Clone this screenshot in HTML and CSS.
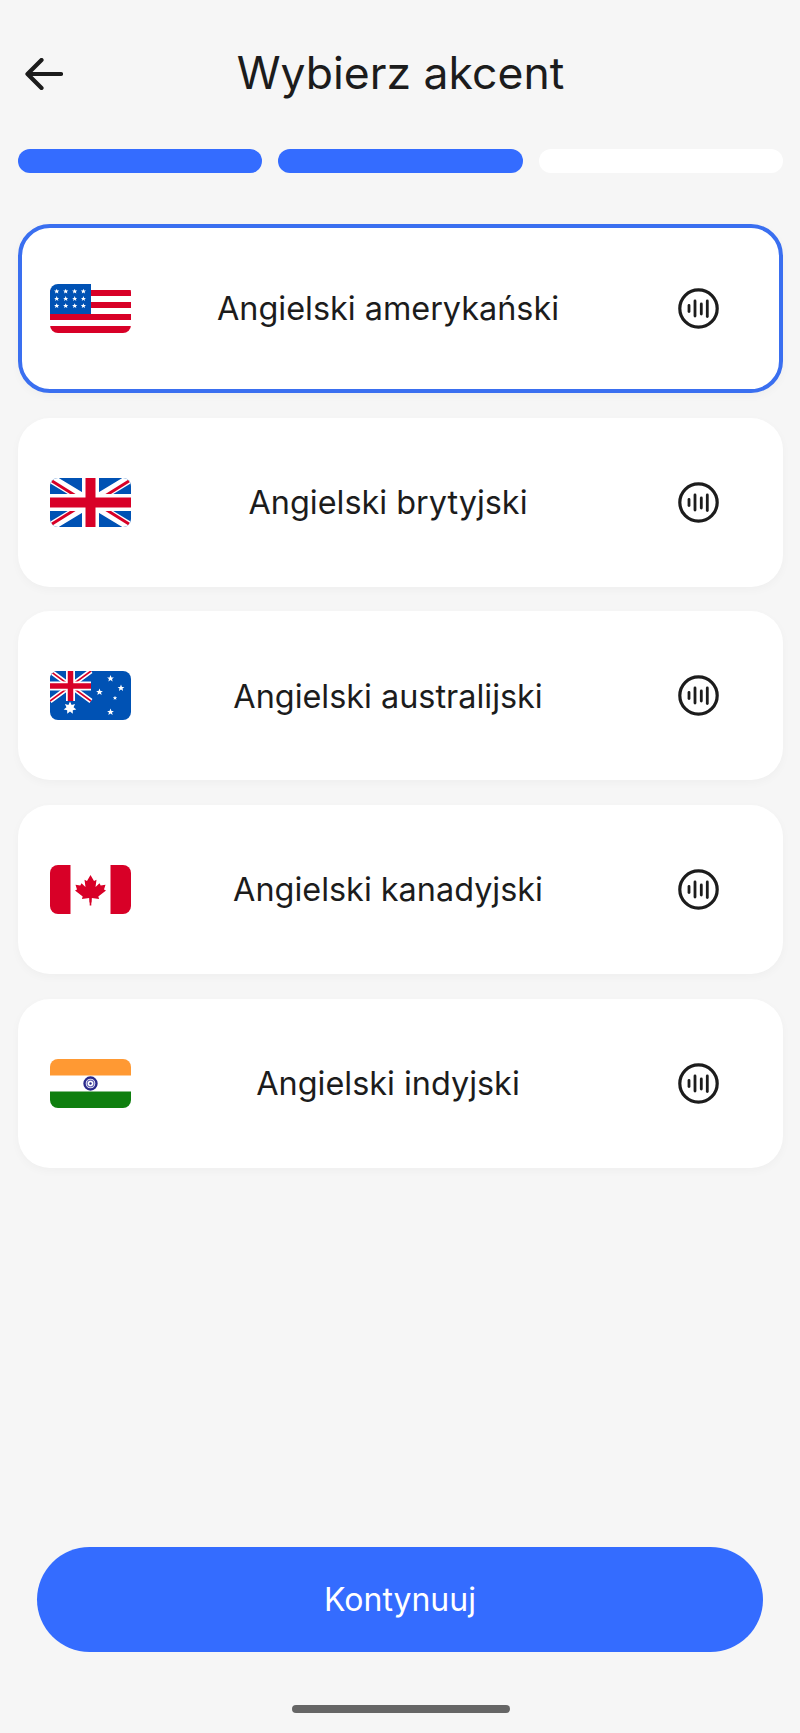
FILE: index.html
```html
<!DOCTYPE html>
<html lang="pl">
<head>
<meta charset="UTF-8" />
<meta name="viewport" content="width=device-width, initial-scale=1" />
<title>Wybierz akcent</title>
<link rel="stylesheet" href="styles.css">
</head>
<body>
  <svg class="sprites" aria-hidden="true">
    <defs>
      <polygon id="star" points="0,-1 .29,-.31 1,-.31 .45,.14 .62,.85 0,.43 -.62,.85 -.45,.14 -1,-.31 -.29,-.31" />
      <polygon id="star7" points="0,-1 .25,-.45 .78,-.62 .55,-.1 .97,.22 .43,.35 .43,.9 0,.55 -.43,.9 -.43,.35 -.97,.22 -.55,-.1 -.78,-.62 -.25,-.45" />
      <g id="sound">
        <circle cx="20.5" cy="20.5" r="18.7" fill="none" stroke="#1c1c1c" stroke-width="3.2" />
        <g stroke="#1c1c1c" stroke-width="2.8" stroke-linecap="round">
          <path d="M11 17.5v6" />
          <path d="M17 13v15" />
          <path d="M23.3 16v10" />
          <path d="M29.3 13v15.5" />
        </g>
      </g>
      <g id="union">
        <rect width="41" height="30" fill="#0052b4" />
        <path d="M0 0L41 30M41 0L0 30" stroke="#fff" stroke-width="5" />
        <path d="M0 0L41 30M41 0L0 30" stroke="#d80027" stroke-width="1.6" />
        <path d="M20.5 0V30M0 15H41" stroke="#fff" stroke-width="9" />
        <path d="M20.5 0V30M0 15H41" stroke="#d80027" stroke-width="5.5" />
      </g>
    </defs>
  </svg>

  <div class="screen">
    <header class="topbar">
      <svg class="back" width="38" height="32" viewBox="0 0 38 32">
        <path d="M36 16H3M16.5 2L2.5 16L16.5 30" fill="none" stroke="#1c1c1c" stroke-width="4.2" stroke-linecap="round" stroke-linejoin="round" />
      </svg>
      <h1 class="title">Wybierz akcent</h1>
    </header>

    <div class="steps">
      <span class="step step-done"></span>
      <span class="step step-done"></span>
      <span class="step"></span>
    </div>

    <ul class="accents">
      <li class="accent accent-selected">
        <svg class="flag" viewBox="0 0 81 49">
          <rect width="81" height="49" fill="#fff" />
          <path d="M0 6h81v6H0zM0 18h81v6H0zM0 30h81v6H0zM0 42h81v7H0z" fill="#d80027" />
          <rect width="41" height="30" fill="#0052b4" />
          <g fill="#fff">
            <use href="#star" transform="translate(6.7 7.3) scale(2.6)" />
            <use href="#star" transform="translate(15.7 7.3) scale(2.6)" />
            <use href="#star" transform="translate(24.7 7.3) scale(2.6)" />
            <use href="#star" transform="translate(33.4 7.3) scale(2.6)" />
            <use href="#star" transform="translate(6.7 14.7) scale(2.6)" />
            <use href="#star" transform="translate(15.7 14.7) scale(2.6)" />
            <use href="#star" transform="translate(24.7 14.7) scale(2.6)" />
            <use href="#star" transform="translate(33.4 14.7) scale(2.6)" />
            <use href="#star" transform="translate(6.7 21.8) scale(2.6)" />
            <use href="#star" transform="translate(15.7 21.8) scale(2.6)" />
            <use href="#star" transform="translate(24.7 21.8) scale(2.6)" />
            <use href="#star" transform="translate(33.4 21.8) scale(2.6)" />
          </g>
        </svg>
        <span class="accent-name">Angielski amerykański</span>
        <svg class="sound" viewBox="0 0 41 41"><use href="#sound" /></svg>
      </li>

      <li class="accent">
        <svg class="flag" viewBox="0 0 81 49">
          <rect width="81" height="49" fill="#0052b4" />
          <path d="M0 0L81 49M81 0L0 49" stroke="#fff" stroke-width="9" />
          <path d="M2 3L26 18M79 3L55 18M2 46L26 31M79 46L55 31" stroke="#d80027" stroke-width="3" />
          <path d="M40.5 0V49M0 24.5H81" stroke="#fff" stroke-width="17" />
          <path d="M40.5 0V49M0 24.5H81" stroke="#d80027" stroke-width="10" />
        </svg>
        <span class="accent-name">Angielski brytyjski</span>
        <svg class="sound" viewBox="0 0 41 41"><use href="#sound" /></svg>
      </li>

      <li class="accent">
        <svg class="flag" viewBox="0 0 81 49">
          <rect width="81" height="49" fill="#0052b4" />
          <use href="#union" />
          <g fill="#fff">
            <use href="#star7" transform="translate(20 37) scale(6.5)" />
            <use href="#star" transform="translate(60.5 7.5) scale(3.4)" />
            <use href="#star" transform="translate(71 17) scale(3.4)" />
            <use href="#star" transform="translate(49.5 21) scale(3.4)" />
            <use href="#star" transform="translate(65 27) scale(2.2)" />
            <use href="#star" transform="translate(60.5 41) scale(3.4)" />
          </g>
        </svg>
        <span class="accent-name">Angielski australijski</span>
        <svg class="sound" viewBox="0 0 41 41"><use href="#sound" /></svg>
      </li>

      <li class="accent">
        <svg class="flag" viewBox="0 0 81 49">
          <rect width="81" height="49" fill="#fff" />
          <path d="M0 0h20.5v49H0zM60.5 0H81v49H60.5z" fill="#d80027" />
          <path d="M40.5 10l3.5 6 2.5-1.3-1 7.3 4-3.800 1.2 2.3 4.800-.8-1.500 4.800 2 1-7.700 6 .8 2.500-7.300-1-.3 4.500h-2l-.3-4.500-7.300 1 .8-2.500-7.700-6 2-1-1.500-4.800 4.800.8 1.200-2.300 4 3.800-1-7.300 2.500 1.300z" fill="#d80027" />
          <path d="M39.7 33h1.6v7.500h-1.600z" fill="#d80027" />
        </svg>
        <span class="accent-name">Angielski kanadyjski</span>
        <svg class="sound" viewBox="0 0 41 41"><use href="#sound" /></svg>
      </li>

      <li class="accent">
        <svg class="flag" viewBox="0 0 81 49">
          <rect width="81" height="49" fill="#fff" />
          <rect width="81" height="16.5" fill="#ff9933" />
          <rect y="32.5" width="81" height="16.5" fill="#0f7f0f" />
          <circle cx="40.5" cy="24.5" r="6" fill="none" stroke="#2a2a8c" stroke-width="2.4" />
          <circle cx="40.5" cy="24.5" r="3.4" fill="none" stroke="#6a6ab8" stroke-width="1.2" />
          <circle cx="40.5" cy="24.5" r="1.2" fill="#2a2a8c" />
        </svg>
        <span class="accent-name">Angielski indyjski</span>
        <svg class="sound" viewBox="0 0 41 41"><use href="#sound" /></svg>
      </li>
    </ul>

    <button class="continue" type="button">Kontynuuj</button>
    <div class="home-bar"></div>
  </div>
</body>
</html>
```

FILE: styles.css
```css
* {
  box-sizing: border-box;
}

body {
  margin: 0;
  background-color: #f6f6f6;
  font-family: Inter, "Noto Sans", sans-serif;
  color: #1c1c1c;
}

.sprites {
  display: block;
  width: 0;
  height: 0;
}

.screen {
  display: flex;
  flex-direction: column;
  height: 1733px;
  padding: 0 17px 20px 18px;
}

/* header */
.topbar {
  display: flex;
  align-items: center;
  justify-content: center;
  position: relative;
  height: 72px;
  margin-top: 37px;
}

.back {
  position: absolute;
  left: 7px;
  top: 21px;
}

.title {
  margin: 0;
  font-size: 44.5px;
  font-weight: 400;
  line-height: 1;
}

/* progress */
.steps {
  display: flex;
  gap: 16px;
  margin-top: 40px;
}

.step {
  flex: 1;
  height: 24px;
  border-radius: 12px;
  background-color: #fff;
}

.step-done {
  background-color: #346cff;
}

/* list */
.accents {
  display: flex;
  flex-direction: column;
  gap: 24.7px;
  margin: 51px 0 0;
  padding: 0;
  list-style: none;
}

.accent {
  display: flex;
  align-items: center;
  height: 169px;
  padding: 0 32px;
  border-radius: 32px;
  background-color: #fff;
  box-shadow: 0 3px 10px rgb(0 0 0 / 0.03);
}

.accent-selected {
  padding: 0 28px;
  border: 4px solid #3a6ff0;
}

.flag {
  flex: none;
  width: 81px;
  height: 49px;
  border-radius: 8px;
}

.accent-name {
  flex: 1;
  padding-top: 2px;
  text-align: center;
  font-size: 32.4px;
  line-height: 1;
}

.sound {
  flex: none;
  width: 41px;
  height: 41px;
  margin-right: 32px;
  margin-left: 33px;
}

/* footer */
.continue {
  display: block;
  height: 105px;
  margin: auto 20px 0 19px;
  border: 0;
  border-radius: 53px;
  background-color: #346cff;
  color: #fff;
  font-family: inherit;
  font-size: 32px;
}

.home-bar {
  width: 218px;
  height: 8px;
  margin: 53px auto 0;
  border-radius: 4px;
  background-color: #666;
}
```
